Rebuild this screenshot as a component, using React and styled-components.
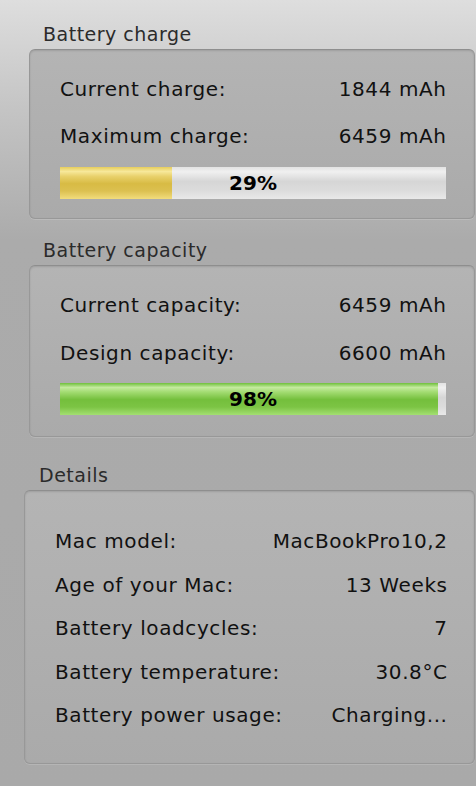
import React from 'react';
import styled, { createGlobalStyle } from 'styled-components';

const GlobalStyle = createGlobalStyle`
    html, body {
        margin: 0;
        padding: 0;
    }
    body {
        width: 476px;
        height: 786px;
        overflow: hidden;
        background: linear-gradient(180deg, #dedede 0px, #c4c4c4 110px, #ababab 240px, #a9a9a9 786px);
        font-family: "DejaVu Sans", "Liberation Sans", sans-serif;
        color: #111;
    }
`

const Page = styled.div`
    display: flex;
    flex-direction: column;
    padding-top: 23px;
`

const Section = styled.section`
    display: flex;
    flex-direction: column;
    margin-left: ${props => props.indent}px;
    margin-bottom: ${props => props.gap || 0}px;
`

const Title = styled.h2`
    margin: 0 0 4px ${props => props.offset}px;
    font-size: 19px;
    line-height: 22px;
    letter-spacing: 0.5px;
    font-weight: 400;
    color: #2b2b2b;
`

const Box = styled.div`
    display: flex;
    flex-direction: column;
    margin-right: 1px;
    padding: ${props => props.pad};
    border: 1px solid #989898;
    border-top-color: #8e8e8e;
    border-radius: 6px;
    background: linear-gradient(180deg, #b4b4b4 0%, #aaaaaa 100%);
    box-shadow: inset 0 1px 2px rgba(0, 0, 0, 0.12), 0 1px 0 rgba(255, 255, 255, 0.15);
`

const Row = styled.div`
    display: flex;
    justify-content: space-between;
    align-items: center;
    height: 30px;
    font-size: 20px;
    letter-spacing: 0.6px;
    margin-bottom: ${props => props.gap}px;
`

const Label = styled.span``

const Value = styled.span`
    margin-right: -0.6px;
`

const Track = styled.div`
    position: relative;
    height: 32px;
    background: linear-gradient(180deg, #e2e2e2 0%, #f0f0f0 15%, #d6d6d6 45%, #dcdcdc 75%, #e8e8e8 100%);
`

const Fill = styled.div`
    height: 100%;
    background: ${props => props.tone === 'green'
        ? 'linear-gradient(180deg, #6fbf3c 0%, #c4ea9e 14%, #a3dc72 28%, #74bf3c 52%, #7cc444 75%, #a3df72 100%)'
        : 'linear-gradient(180deg, #e6cd5c 0%, #f7e89a 14%, #e8d06a 30%, #d8bb44 52%, #dcc050 75%, #f2dc7c 100%)'};
`

const Percent = styled.span`
    position: absolute;
    inset: 0;
    display: flex;
    align-items: center;
    justify-content: center;
    font-size: 20px;
    font-weight: 700;
    color: #000;
`

const Bar = ({ value, tone }) => (
    <Track>
        <Fill tone={tone} style={{ width: `${value}%` }} />
        <Percent>{value}%</Percent>
    </Track>
)

const details = [
    ['Mac model:', 'MacBookPro10,2'],
    ['Age of your Mac:', '13 Weeks'],
    ['Battery loadcycles:', '7'],
    ['Battery temperature:', '30.8°C'],
    ['Battery power usage:', 'Charging...'],
]

const App = () => {
    return (
        <>
            <GlobalStyle />
            <Page>
                <Section indent={29} gap={20}>
                    <Title offset={14}>Battery charge</Title>
                    <Box pad="24px 28px 19px 30px">
                        <Row gap={17}>
                            <Label>Current charge:</Label>
                            <Value>1844 mAh</Value>
                        </Row>
                        <Row gap={16}>
                            <Label>Maximum charge:</Label>
                            <Value>6459 mAh</Value>
                        </Row>
                        <Bar value={29} tone="yellow" />
                    </Box>
                </Section>
                <Section indent={29} gap={27}>
                    <Title offset={14}>Battery capacity</Title>
                    <Box pad="24px 28px 21px 30px">
                        <Row gap={18}>
                            <Label>Current capacity:</Label>
                            <Value>6459 mAh</Value>
                        </Row>
                        <Row gap={15}>
                            <Label>Design capacity:</Label>
                            <Value>6600 mAh</Value>
                        </Row>
                        <Bar value={98} tone="green" />
                    </Box>
                </Section>
                <Section indent={24}>
                    <Title offset={15}>Details</Title>
                    <Box pad="35px 27px 33px 30px">
                        {details.map(([label, value], i) => (
                            <Row key={label} gap={i < details.length - 1 ? 13.5 : 0}>
                                <Label>{label}</Label>
                                <Value>{value}</Value>
                            </Row>
                        ))}
                    </Box>
                </Section>
            </Page>
        </>
    );
};

export default App;
